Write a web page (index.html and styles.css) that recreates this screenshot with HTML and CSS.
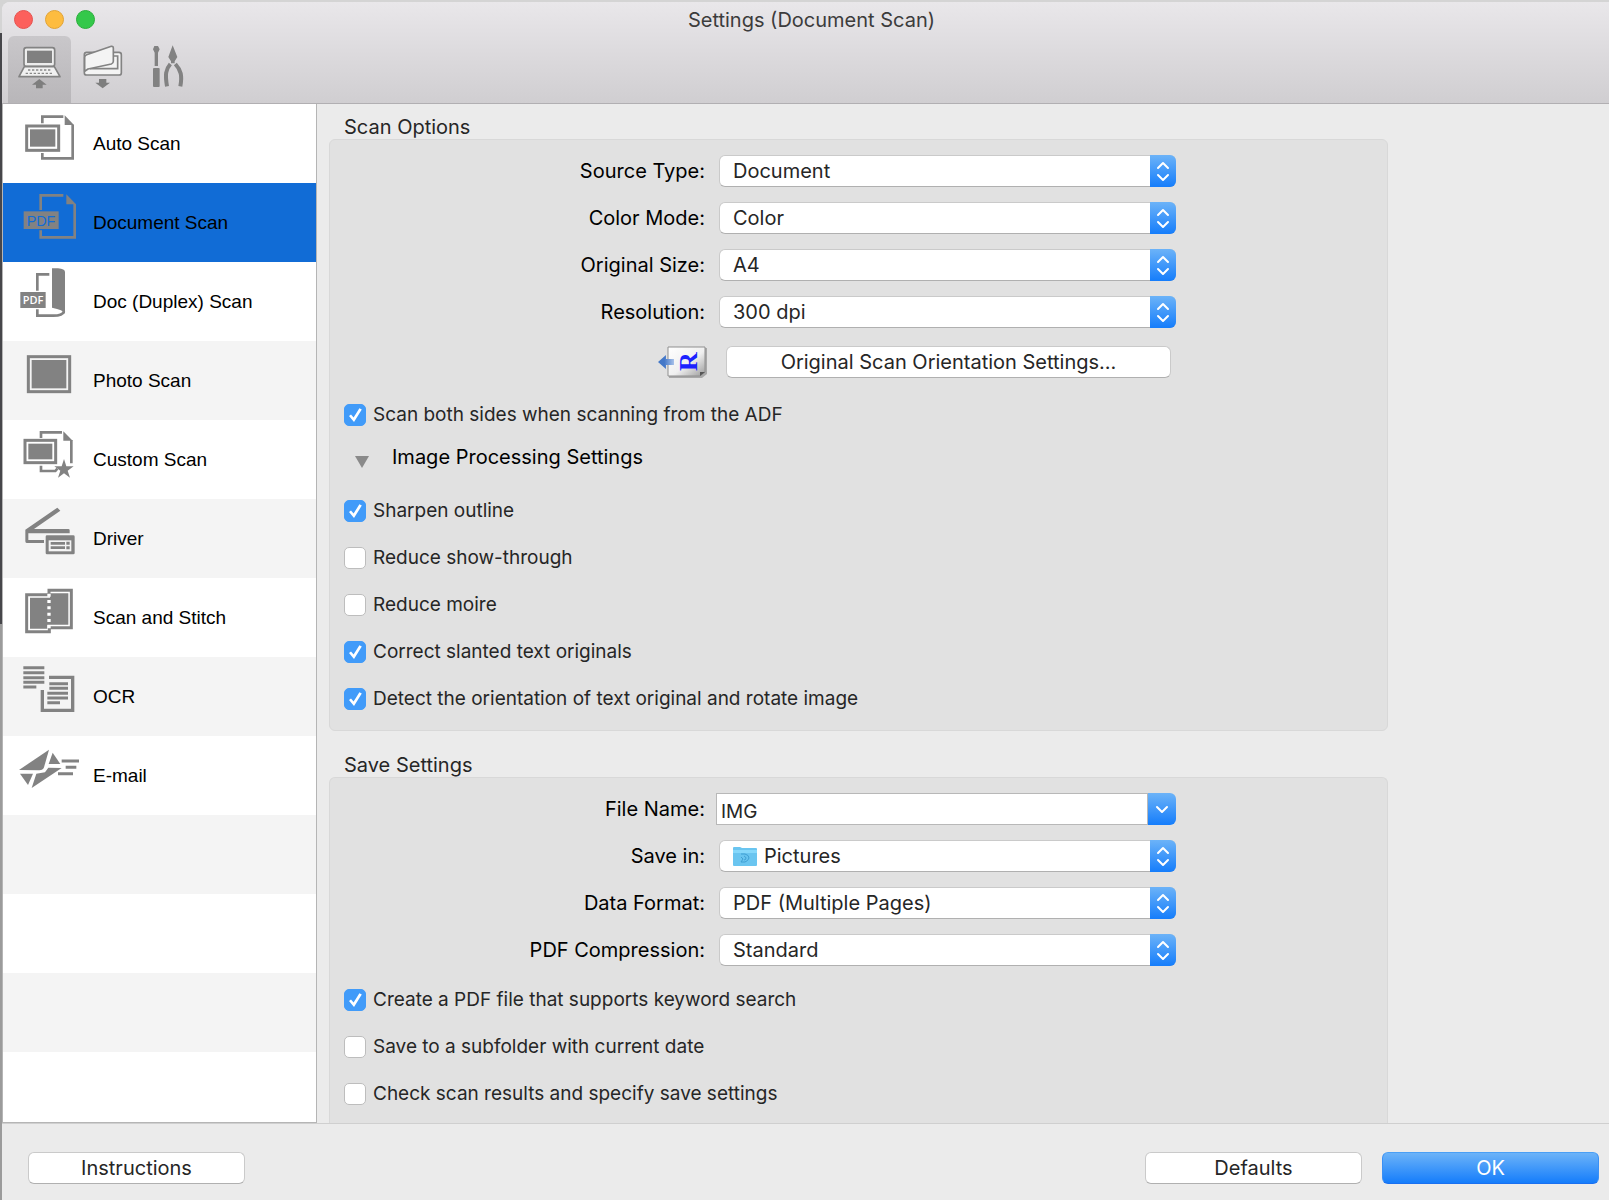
FILE: index.html
```html
<!DOCTYPE html>
<html lang="en">
<head>
<meta charset="utf-8">
<title>Settings (Document Scan)</title>
<link rel="stylesheet" href="styles.css">
</head>
<body>
<div class="window">
  <header class="titlebar">
    <div class="titlebar-row">
      <div class="lights">
        <button class="light light-close" type="button" aria-label="Close"></button>
        <button class="light light-min" type="button" aria-label="Minimize"></button>
        <button class="light light-zoom" type="button" aria-label="Zoom"></button>
      </div>
      <h1 class="title">Settings (Document Scan)</h1>
    </div>
    <div class="toolbar">
      <button class="tool tool-active" type="button" aria-label="Scanning from a computer">
        <svg viewBox="24 108 189 201" width="63" height="67">
          <rect x="72" y="143" width="92" height="56" rx="7" fill="#ededed" stroke="#838383" stroke-width="5"/>
          <rect x="81" y="152" width="75" height="37" fill="#808080"/>
          <path d="M73 200H163L180 230H57Z" fill="#f1f1f1" stroke="#838383" stroke-width="5" stroke-linejoin="round"/>
          <path d="M84 210H156M77 220H160" stroke="#8a8a8a" stroke-width="4" stroke-dasharray="7 5"/>
          <path d="M118 237L140 254H128V265H108V254H96Z" fill="#7e7e7e"/>
        </svg>
      </button>
      <button class="tool" type="button" aria-label="Scanning from the operation panel">
        <svg viewBox="213 108 189 201" width="63" height="67">
          <rect x="253" y="157" width="111" height="68" rx="7" fill="#f4f4f4" stroke="#838383" stroke-width="5"/>
          <path d="M340 168H353V206H270" fill="none" stroke="#838383" stroke-width="5"/>
          <path d="M260 164L334 139Q340 138 340 145V184Q340 190 334 192L264 207L254 214V172Q254 166 260 164Z" fill="#f4f4f4" stroke="#838383" stroke-width="5" stroke-linejoin="round"/>
          <path d="M297 237H319V248H330L308 265L286 248H297Z" fill="#7e7e7e"/>
        </svg>
      </button>
      <button class="tool" type="button" aria-label="General settings">
        <svg viewBox="402 108 189 201" width="63" height="67" fill="#828282">
          <path d="M463 138H474L479 148L474 158V198H464V158L459 148Z"/>
          <rect x="459" y="204" width="20" height="57" rx="3"/>
          <path d="M518 136L532 171L524 184V190H513V184L505 171Z"/>
          <path d="M511 192C497 208 495 224 501 259M526 192C543 210 547 228 541 259" fill="none" stroke="#828282" stroke-width="12"/>
        </svg>
      </button>
    </div>
  </header>

  <div class="body">
    <nav class="sidebar" aria-label="Scan types">
      <a class="item" href="#auto">
        <svg viewBox="9 312 270 237" width="90" height="79" fill="#828282">
          <path d="M127 370V350H190M127 459V475H218V374" fill="none" stroke="#828282" stroke-width="8"/>
          <path d="M194 346L222 375H194Z"/>
          <rect x="80" y="378" width="96" height="73" fill="#fff" stroke="#828282" stroke-width="9"/>
          <rect x="90" y="388" width="76" height="52"/>
        </svg>Auto Scan</a>
      <a class="item item-active" href="#document" aria-current="page">
        <svg viewBox="9 9 270 237" width="90" height="79" fill="#828282">
          <path d="M122 90V46H190M122 151V172H224V72" fill="none" stroke="#828282" stroke-width="8"/>
          <path d="M199 43L228 73H199Z"/>
          <rect x="71" y="94" width="105" height="53"/>
          <text class="pdf-mark" x="123" y="137" font-size="43" text-anchor="middle">PDF</text>
        </svg>Document Scan</a>
      <a class="item" href="#duplex">
        <svg viewBox="9 246 270 237" width="90" height="79" fill="#828282">
          <path d="M112 332V283H148M112 388V407H160Q188 407 192 394" fill="none" stroke="#828282" stroke-width="8"/>
          <path d="M156 265H174Q195 267 195 276V402Q190 389 156 383Z"/>
          <rect x="61" y="336" width="76" height="48"/>
          <text class="pdf-mark pdf-mark-light" x="99" y="373" font-size="33" text-anchor="middle">PDF</text>
        </svg>Doc (Duplex) Scan</a>
      <a class="item" href="#photo">
        <svg viewBox="9 483 270 237" width="90" height="79" fill="#828282">
          <rect x="85" y="530" width="124" height="105" fill="#f4f4f4" stroke="#828282" stroke-width="9"/>
          <rect x="95" y="540" width="104" height="85"/>
        </svg>Photo Scan</a>
      <a class="item" href="#custom">
        <svg viewBox="9 30 270 237" width="90" height="79" fill="#828282">
          <path d="M123 84V67H186M123 167V183H166L172 176M214 90V160" fill="none" stroke="#828282" stroke-width="8"/>
          <path d="M190 64L218 92H190Z"/>
          <rect x="75" y="91" width="92" height="67" fill="#fff" stroke="#828282" stroke-width="9"/>
          <rect x="85" y="101" width="72" height="47"/>
          <path d="M192 147L199 169H221L203 182L210 203L192 190L174 203L181 182L163 169H185Z"/>
        </svg>Custom Scan</a>
      <a class="item" href="#driver">
        <svg viewBox="9 267 270 237" width="90" height="79" fill="#828282">
          <path d="M172 293L181 302L102 357H205Q209 357 209 361V370H85V390H132V399H80Q76 399 76 394V359Z"/>
          <rect x="137" y="376" width="87" height="57" rx="4"/>
          <path d="M146 391H214V424H146Z" fill="#f4f4f4"/>
          <path d="M152 400H195M152 413H195" stroke="#828282" stroke-width="8"/>
          <path d="M199 400H209M199 413H209" stroke="#828282" stroke-width="9"/>
        </svg>Driver</a>
      <a class="item" href="#stitch">
        <svg viewBox="9 504 270 237" width="90" height="79" fill="#828282">
          <path d="M80 554H147V541H214V653H148V665H80Z" fill="#fff" stroke="#828282" stroke-width="9"/>
          <path d="M90 563H150V550H205V644H142V656H90Z"/>
          <path d="M147 551V660" stroke="#fff" stroke-width="10" stroke-dasharray="9 10"/>
        </svg>Scan and Stitch</a>
      <a class="item" href="#ocr">
        <svg viewBox="9 21 270 237" width="90" height="79" fill="none" stroke="#828282">
          <path d="M70 53H133M70 68H133M70 83H133M70 97H133M70 111H109M148 101H204M148 115H204M142 130H204M142 144H204M142 158H180" stroke-width="9"/>
          <path d="M147 82H218V181H127V120" stroke-width="10"/>
        </svg>OCR</a>
      <a class="item" href="#email">
        <svg viewBox="9 258 270 237" width="90" height="79" fill="#828282">
          <path d="M57 360L147 299L132 352Q129 361 118 361Z"/>
          <path d="M158 308L181 342H146Z"/>
          <path d="M60 371H99L84 405Z"/>
          <path d="M109 371L135 367L145 353L185 354L95 414Z"/>
          <path d="M185 333H237M197 352H229M174 371H219" stroke="#828282" stroke-width="9"/>
        </svg>E-mail</a>
    </nav>

    <main class="content">
      <section class="section">
        <h2 class="section-title">Scan Options</h2>
        <div class="group">
          <div class="fields">
            <div class="field">
              <label for="source">Source Type:</label>
              <div class="popup">
                <select id="source"><option>Document</option><option>Photo</option></select>
                <svg class="stepper" viewBox="0 0 26 32" width="26" height="32"><path d="M8 13L13 8L18 13M8 20L13 25L18 20"/></svg>
              </div>
            </div>
            <div class="field">
              <label for="color">Color Mode:</label>
              <div class="popup">
                <select id="color"><option>Color</option><option>Grayscale</option></select>
                <svg class="stepper" viewBox="0 0 26 32" width="26" height="32"><path d="M8 13L13 8L18 13M8 20L13 25L18 20"/></svg>
              </div>
            </div>
            <div class="field">
              <label for="size">Original Size:</label>
              <div class="popup">
                <select id="size"><option>A4</option><option>Letter</option></select>
                <svg class="stepper" viewBox="0 0 26 32" width="26" height="32"><path d="M8 13L13 8L18 13M8 20L13 25L18 20"/></svg>
              </div>
            </div>
            <div class="field">
              <label for="resolution">Resolution:</label>
              <div class="popup">
                <select id="resolution"><option>300 dpi</option><option>600 dpi</option></select>
                <svg class="stepper" viewBox="0 0 26 32" width="26" height="32"><path d="M8 13L13 8L18 13M8 20L13 25L18 20"/></svg>
              </div>
            </div>
          </div>
          <div class="orientation">
            <svg viewBox="0 0 50 34" width="50" height="34" aria-hidden="true">
              <defs>
                <linearGradient id="sheet" x1="0" y1="0" x2="1" y2="1"><stop offset="0" stop-color="#fff"/><stop offset=".55" stop-color="#f0f0f0"/><stop offset="1" stop-color="#9a9a9a"/></linearGradient>
                <linearGradient id="arrow" x1="0" x2="1"><stop offset=".4" stop-color="#4478c8"/><stop offset="1" stop-color="#a9c2ea"/></linearGradient>
              </defs>
              <path d="M11 3H49V29L44 33H11Z" fill="#a8a8a8"/>
              <path d="M10 2H47V27L42 31H10Z" fill="url(#sheet)" stroke="#8f8f8f"/>
              <path d="M42 31V27H47Z" fill="#555"/>
              <path d="M0 17L8 10V14H16V20H8V24Z" fill="url(#arrow)"/>
              <text class="letter" transform="translate(39 26) rotate(-90)" font-size="26">R</text>
            </svg>
            <button class="button" type="button">Original Scan Orientation Settings...</button>
          </div>
          <label class="check check-lead"><input type="checkbox" checked>Scan both sides when scanning from the ADF</label>
          <button class="disclosure" type="button" aria-expanded="true">
            <svg viewBox="0 0 14 12" width="14" height="12"><path d="M0 0H14L7 12Z" fill="#8a8a8a"/></svg>
            <span>Image Processing Settings</span>
          </button>
          <div class="checks">
            <label class="check"><input type="checkbox" checked>Sharpen outline</label>
            <label class="check"><input type="checkbox">Reduce show-through</label>
            <label class="check"><input type="checkbox">Reduce moire</label>
            <label class="check"><input type="checkbox" checked>Correct slanted text originals</label>
            <label class="check"><input type="checkbox" checked>Detect the orientation of text original and rotate image</label>
          </div>
        </div>
      </section>

      <section class="section section-last">
        <h2 class="section-title">Save Settings</h2>
        <div class="group group-open">
          <div class="fields">
            <div class="field">
              <label for="filename">File Name:</label>
              <div class="combo">
                <input id="filename" type="text" value="IMG">
                <button class="combo-button" type="button" aria-label="Show file names">
                  <svg viewBox="0 0 28 32" width="28" height="32"><path d="M9 14L14 19L19 14"/></svg>
                </button>
              </div>
            </div>
            <div class="field">
              <label for="folder">Save in:</label>
              <div class="popup popup-icon">
                <select id="folder"><option>Pictures</option><option>Documents</option></select>
                <svg class="folder" viewBox="0 0 24 19" width="24" height="19">
                  <path d="M0 1Q0 0 1 0H7L9 1H23Q24 1 24 2V18Q24 19 23 19H1Q0 19 0 18Z" fill="#6ac5f0"/>
                  <path d="M0 3H24V6H0Z" fill="#86d8fb"/>
                  <path d="M8 7H12Q16 8 16 11Q15 14 12 15H8L10 12L8 10M11 9Q13 10 13 11Q13 13 11 13" fill="none" stroke="#3f9fd3"/>
                </svg>
                <svg class="stepper" viewBox="0 0 26 32" width="26" height="32"><path d="M8 13L13 8L18 13M8 20L13 25L18 20"/></svg>
              </div>
            </div>
            <div class="field">
              <label for="format">Data Format:</label>
              <div class="popup">
                <select id="format"><option>PDF (Multiple Pages)</option><option>PDF</option></select>
                <svg class="stepper" viewBox="0 0 26 32" width="26" height="32"><path d="M8 13L13 8L18 13M8 20L13 25L18 20"/></svg>
              </div>
            </div>
            <div class="field">
              <label for="compression">PDF Compression:</label>
              <div class="popup">
                <select id="compression"><option>Standard</option><option>High</option></select>
                <svg class="stepper" viewBox="0 0 26 32" width="26" height="32"><path d="M8 13L13 8L18 13M8 20L13 25L18 20"/></svg>
              </div>
            </div>
          </div>
          <div class="checks checks-save">
            <label class="check"><input type="checkbox" checked>Create a PDF file that supports keyword search</label>
            <label class="check"><input type="checkbox">Save to a subfolder with current date</label>
            <label class="check"><input type="checkbox">Check scan results and specify save settings</label>
          </div>
        </div>
      </section>
    </main>
  </div>

  <footer class="footer">
    <button class="button" type="button">Instructions</button>
    <div class="footer-end">
      <button class="button" type="button">Defaults</button>
      <button class="button button-primary" type="button">OK</button>
    </div>
  </footer>
</div>
</body>
</html>
```

FILE: styles.css
```css
* {
  box-sizing: border-box;
}

body {
  margin: 0;
  padding: 2px 0 0 2px;
  background: linear-gradient(#d4d4d4 33px, #46464a 33px, #46464a 624px, #9b9b9b 624px);
  color: #262626;
  font-family: Inter, Roboto, "Liberation Sans", sans-serif;
  font-size: 20px;
  line-height: 24px;
}

button,
input,
select {
  margin: 0;
  padding: 0;
  border: 0;
  color: inherit;
  font: inherit;
}

svg {
  display: block;
  flex: none;
}

.window {
  display: flex;
  flex-direction: column;
  min-height: calc(100vh - 2px);
  background: #ebebeb;
  border-top-left-radius: 8px;
  overflow: hidden;
}

/* Title bar and toolbar */

.titlebar {
  background: linear-gradient(#e9e7ea, #d0ced1);
  border-bottom: 1px solid #b1afb2;
}

.titlebar-row {
  display: grid;
  grid-template-columns: 120px 1fr 108px;
  align-items: center;
  height: 34px;
}

.lights {
  display: flex;
  gap: 12px;
  padding-left: 12px;
}

.light {
  width: 19px;
  height: 19px;
  border-radius: 50%;
}

.light-close {
  background: #fc605c;
  border: 1px solid #e5524f;
}

.light-min {
  background: #fdbc40;
  border: 1px solid #e1a336;
}

.light-zoom {
  background: #34c84a;
  border: 1px solid #2aae3b;
}

.title {
  margin: 0;
  padding-top: 2px;
  color: #3c3c3c;
  font-size: 20px;
  font-weight: 400;
  text-align: center;
}

.toolbar {
  display: flex;
  padding-left: 6px;
}

.tool {
  background: none;
  border-radius: 6px 6px 0 0;
}

.tool-active {
  background: linear-gradient(#c9c7ca, #b8b6b9);
}

/* Scan type list */

.body {
  display: flex;
  flex: 1;
}

.sidebar {
  flex: none;
  width: 315px;
  border: 1px solid #b5b5b5;
  border-top: 0;
  background: repeating-linear-gradient(#fff 0 79px, #f4f4f4 79px 158px);
}

.item {
  display: flex;
  align-items: center;
  height: 79px;
  color: #000;
  font-family: "Liberation Sans", Arial, sans-serif;
  font-size: 19px;
  text-decoration: none;
}

.item-active {
  background: #116cd6;
}

.pdf-mark {
  fill: #116cd6;
  font-family: "Liberation Sans", Arial, sans-serif;
}

.pdf-mark-light {
  fill: #fff;
  font-family: "Open Sans", "Noto Sans", sans-serif;
  font-weight: 600;
}

/* Settings */

.content {
  display: flex;
  flex: 1;
  flex-direction: column;
  gap: 22px;
  padding: 11px 12px 0;
}

.section {
  max-width: 1059px;
}

.section-last {
  display: flex;
  flex: 1;
  flex-direction: column;
}

.section-title {
  margin: 0 15px;
  font-size: 20px;
  font-weight: 400;
}

.group {
  padding: 15px 15px 20px 14px;
  border: 1px solid #d8d8d8;
  border-radius: 6px;
  background: #e1e1e1;
}

.group-open {
  flex: 1;
  padding-bottom: 16px;
  border-bottom: 0;
  border-radius: 6px 6px 0 0;
}

.fields {
  display: grid;
  gap: 15px;
}

.field {
  display: grid;
  grid-template-columns: 361px 457px;
  gap: 14px;
  align-items: center;
}

.field label {
  color: #000;
  text-align: right;
}

.popup {
  display: grid;
  grid-template-columns: 14px 1fr 26px;
  align-items: center;
}

.popup select {
  grid-area: 1 / 1 / 2 / 4;
  width: 100%;
  height: 32px;
  padding: 0 40px 0 13px;
  appearance: none;
  background: #fff;
  border: 1px solid #cacaca;
  border-bottom-color: #b0b0b0;
  border-radius: 6px;
}

.popup-icon select {
  padding-left: 44px;
}

.stepper {
  grid-area: 1 / 3 / 2 / 4;
  border-radius: 0 6px 6px 0;
  pointer-events: none;
}

.stepper,
.combo-button {
  background: linear-gradient(#6cb3f8, #157dfb);
  fill: none;
  stroke: #fff;
  stroke-width: 2px;
  stroke-linecap: round;
  stroke-linejoin: round;
}

.folder {
  grid-area: 1 / 2 / 2 / 3;
  pointer-events: none;
}

.combo {
  display: flex;
  margin-left: -3px;
}

.combo input {
  flex: 1;
  min-width: 0;
  height: 32px;
  padding: 4px 4px 0;
  background: #fff;
  border: 1px solid #b8b8b8;
  font-size: 19px;
}

.combo-button {
  border-radius: 0 6px 6px 0;
}

.orientation {
  display: flex;
  align-items: center;
  gap: 18px;
  height: 32px;
  margin-top: 18px;
  padding-left: 314px;
}

.orientation .button {
  width: 445px;
}

.letter {
  fill: #1b22ff;
  font-family: "Liberation Serif", "Times New Roman", serif;
  font-weight: 700;
}

.button {
  width: 217px;
  height: 32px;
  background: #fff;
  border: 1px solid #cacaca;
  border-bottom-color: #b0b0b0;
  border-radius: 6px;
}

.button-primary {
  background: linear-gradient(#6cb3f8, #157dfb);
  border-color: #4a9ff5 #3a90f5 #1a70f0;
  color: #fff;
}

.check {
  display: flex;
  align-items: center;
  gap: 7px;
  height: 22px;
  font-size: 19px;
}

.check-lead {
  margin-top: 26px;
}

.check input {
  display: grid;
  flex: none;
  width: 22px;
  height: 22px;
  appearance: none;
  background: #fff;
  border: 1px solid #bdbdbd;
  border-radius: 5px;
}

.check input:checked {
  background: #419bf9;
  border-color: #419bf9;
}

.check input:checked::before {
  content: "";
  background: #fff;
  clip-path: polygon(20% 55%, 30% 47%, 43% 63%, 72% 16%, 84% 23%, 45% 85%);
}

.disclosure {
  display: flex;
  align-items: center;
  gap: 23px;
  height: 32px;
  margin-top: 15px;
  padding-left: 11px;
  background: none;
  color: #000;
}

.disclosure svg {
  margin-top: 10px;
}

.checks {
  display: grid;
  gap: 25px;
  margin-top: 27px;
}

.checks-save {
  margin-top: 23px;
}

/* Bottom bar */

.footer {
  display: flex;
  justify-content: space-between;
  padding: 28px 10px 16px 26px;
  border-top: 1px solid #cfcfcf;
}

.footer-end {
  display: flex;
  gap: 20px;
}
```
